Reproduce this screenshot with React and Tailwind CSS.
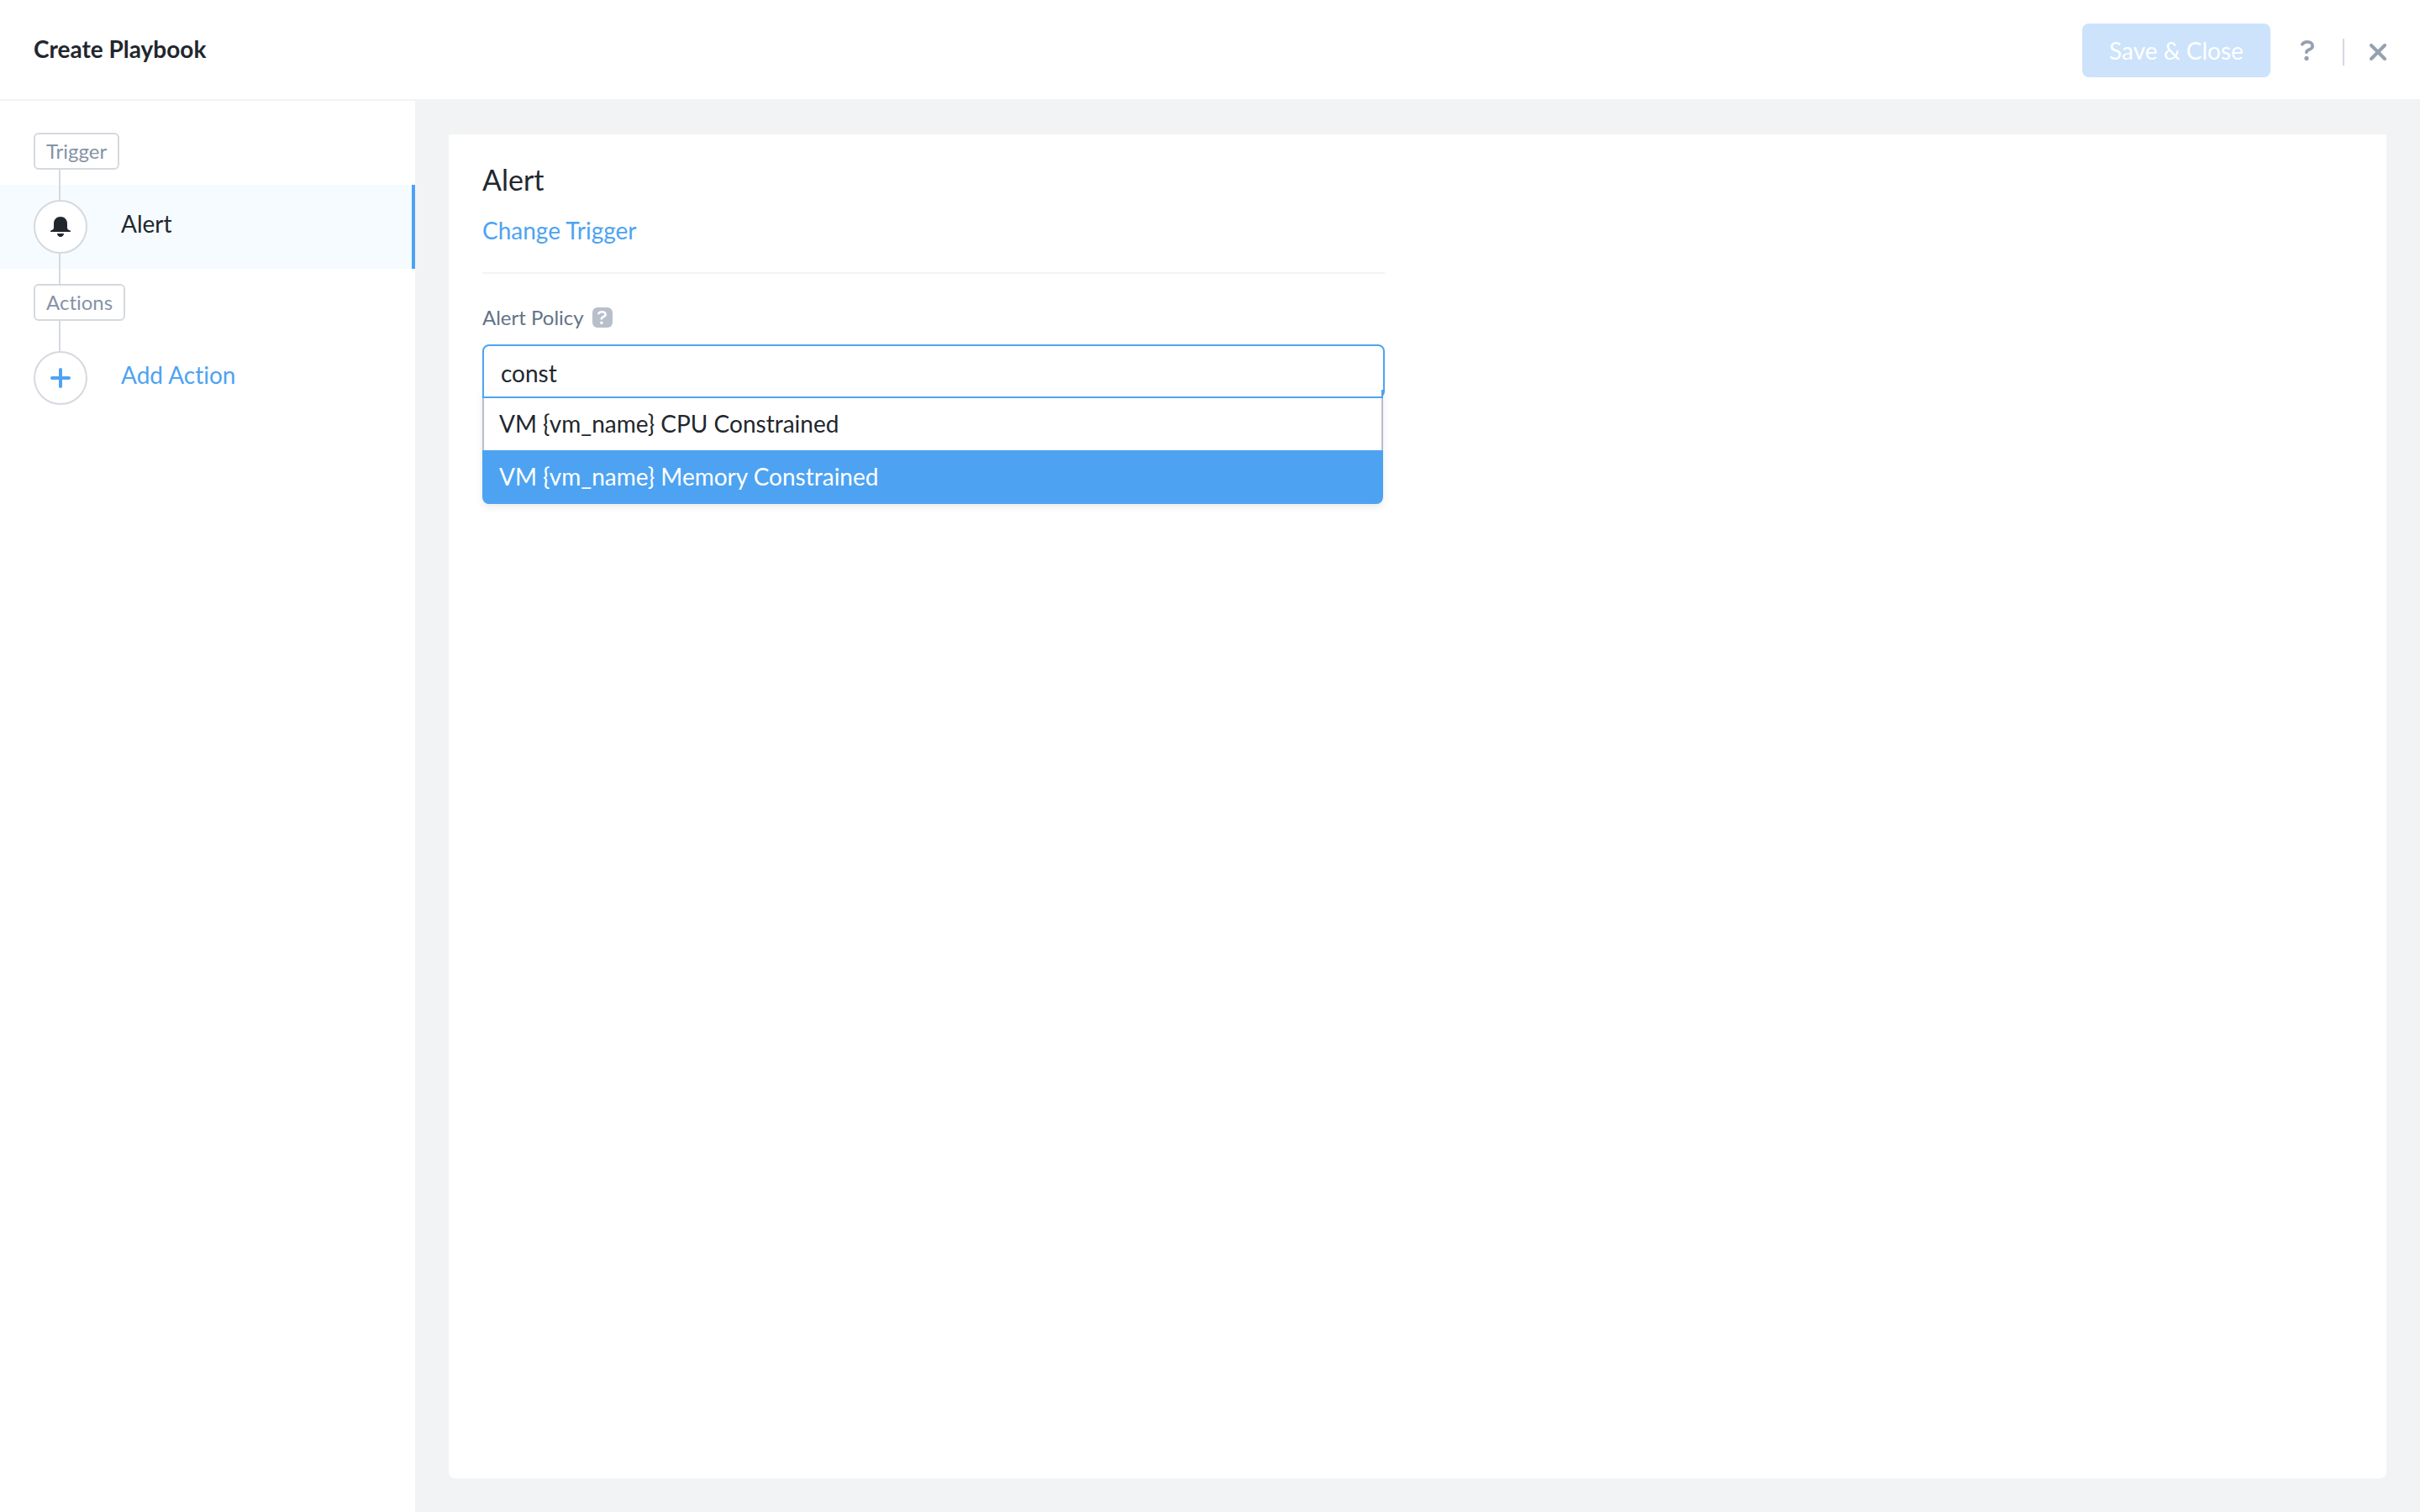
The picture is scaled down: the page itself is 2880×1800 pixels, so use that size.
import { useState } from 'react'

const POLICIES = [
  'VM {vm_name} CPU Constrained',
  'VM {vm_name} Memory Constrained',
]

function BellIcon() {
  return (
    <svg width="24" height="24" viewBox="0 0 24 24" fill="currentColor" aria-hidden="true">
      <path d="M12 0C7.400 0 4 3.500 4 8v5c0 1.600-.9 2.500-2.400 3C.6 16.300 0 16.700 0 17.400 0 17.800.2 18 .6 18h22.800c.4 0 .6-.2.6-.6 0-.7-.6-1.100-1.600-1.400-1.500-.5-2.400-1.400-2.400-3V8c0-4.500-3.400-8-8-8Z" />
      <path d="M8 20h8c0 2.300-1.700 4-4 4s-4-1.700-4-4Z" />
    </svg>
  )
}

function PlusIcon() {
  return (
    <svg width="24" height="24" viewBox="0 0 24 24" fill="none" stroke="currentColor" strokeWidth="4" strokeLinecap="round" aria-hidden="true">
      <path d="M12 2v20M2 12h20" />
    </svg>
  )
}

function QuestionIcon({ width, height }) {
  return (
    <svg width={width} height={height} viewBox="0 0 16 24" fill="none" aria-hidden="true">
      <path d="M1.900 4.600C3.300 2.800 5.200 1.900 8 1.900c3.600 0 6.100 1.900 6.100 5 0 4.600-7.200 3.400-7.200 7.300" stroke="currentColor" strokeWidth="3.800" strokeLinecap="round" />
      <circle cx="7" cy="21.400" r="2.600" fill="currentColor" />
    </svg>
  )
}

function CloseIcon() {
  return (
    <svg width="20" height="20" viewBox="0 0 20 20" fill="none" stroke="currentColor" strokeWidth="4" strokeLinecap="round" aria-hidden="true">
      <path d="M2 2l16 16M18 2L2 18" />
    </svg>
  )
}

// Vertical line joining the tags and the step circles
function Connector() {
  return <div className="ml-[30px] h-[18px] w-[2px] bg-[#d5d9df]" />
}

function StepTag({ children }) {
  return (
    <div className="pl-10">
      <div className="flex h-11 w-fit items-center rounded-md border-2 border-[#d5d9df] bg-white px-[13px] text-2xl text-[#8593a5]">
        {children}
      </div>
    </div>
  )
}

function Step({ icon, label, active }) {
  return (
    <button
      type="button"
      className={`flex h-[100px] w-full items-center gap-10 border-r-4 pl-10 text-left text-[28px] ${
        active
          ? 'border-[#4da3f2] bg-[#f5fbff] text-[#22272e]'
          : 'border-transparent bg-white text-[#4da3f2]'
      }`}
    >
      <span className="flex h-full flex-col">
        <Connector />
        <span className="flex size-16 items-center justify-center rounded-full border-2 border-[#d5d9df] bg-white">
          {icon}
        </span>
        {active && <Connector />}
      </span>
      <span className="pb-2">{label}</span>
    </button>
  )
}

export default function App() {
  const [query, setQuery] = useState('const')
  const [selected, setSelected] = useState(1)

  return (
    <div className="flex h-screen flex-col bg-[#f2f3f5] font-[Lato,sans-serif] text-[#22272e] [font-variant-ligatures:none]">
      <header className="flex h-[120px] shrink-0 items-center border-b-2 border-[#f2f3f5] bg-white px-10 pt-[2px]">
        <h1 className="pb-1 text-[28px] font-bold">Create Playbook</h1>
        <button
          type="button"
          disabled
          className="ml-auto h-16 w-56 rounded-lg bg-[#cce3fb] text-[28px] text-white"
        >
          Save &amp; Close
        </button>
        <button type="button" aria-label="Help" className="mr-[34px] ml-9 text-[#95a1b1]">
          <QuestionIcon width={16} height={24} />
        </button>
        <div className="flex items-center gap-[30px] pt-1">
          <div className="h-8 w-[2px] bg-[#d5d9df]" />
          <button type="button" aria-label="Close" className="text-[#95a1b1]">
            <CloseIcon />
          </button>
        </div>
      </header>

      <div className="flex min-h-0 flex-1">
        <nav className="w-[494px] shrink-0 bg-white pt-[38px]">
          <StepTag>Trigger</StepTag>
          <div className="pl-10"><Connector /></div>
          <Step icon={<BellIcon />} label="Alert" active />
          <div className="pl-10"><Connector /></div>
          <StepTag>Actions</StepTag>
          <div className="pl-10"><Connector /></div>
          <Step icon={<PlusIcon />} label="Add Action" />
        </nav>

        <main className="flex flex-1 p-10">
          <section className="flex-1 rounded-b-lg bg-white p-10">
            <div className="w-[1074px] max-w-full">
              <div className="border-b-2 border-[#f2f3f5] pb-8">
                <h2 className="text-[34px] leading-7">Alert</h2>
                <a href="#triggers" className="mt-7 block w-fit text-[28px] leading-9 text-[#4da3f2]">
                  Change Trigger
                </a>
              </div>

              <div className="mt-9 flex h-8 items-center gap-[10px] text-2xl text-[#627386]">
                <label htmlFor="alert-policy">Alert Policy</label>
                <button
                  type="button"
                  aria-label="About alert policy"
                  className="flex size-6 items-center justify-center rounded-md bg-[#b8bfca] text-white"
                >
                  <QuestionIcon width={11} height={16} />
                </button>
              </div>

              <div className="relative mt-4">
                <input
                  id="alert-policy"
                  type="text"
                  value={query}
                  onChange={e => setQuery(e.target.value)}
                  className="block h-16 w-full rounded-lg border-2 border-[#4da3f2] bg-white px-5 pt-1 text-[28px] outline-none"
                />
                {/* Menu hangs over the bottom edge of the text box */}
                <div className="absolute top-[54px] right-[2px] left-0 rounded-b-lg shadow-[0_4px_8px_rgba(0,0,0,0.08)]">
                  <div className="h-[10px] border-x-2 border-b-2 border-[#4da3f2] bg-white" />
                  <ul role="listbox" aria-label="Alert Policy" className="text-[28px]">
                    {POLICIES.map((name, i) => (
                      <li
                        key={name}
                        role="option"
                        aria-selected={i === selected}
                        onMouseEnter={() => setSelected(i)}
                        className={`flex h-16 cursor-pointer items-center border-x-2 px-[18px] pb-[2px] first:h-[62px] last:rounded-b-lg ${
                          i === selected
                            ? 'border-[#4da3f2] bg-[#4da3f2] text-white'
                            : 'border-[#b8bfca] bg-white'
                        }`}
                      >
                        {name}
                      </li>
                    ))}
                  </ul>
                </div>
              </div>
            </div>
          </section>
        </main>
      </div>
    </div>
  )
}
